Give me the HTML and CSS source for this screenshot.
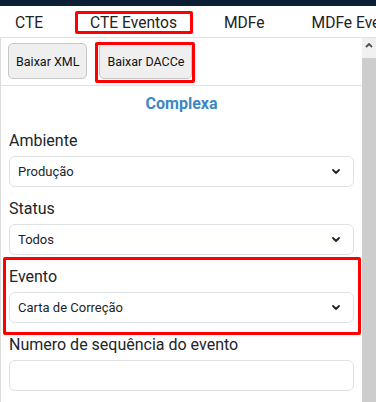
FILE: index.html
```html
<!DOCTYPE html>
<html lang="pt-BR">
<head>
    <meta charset="UTF-8">
    <meta name="viewport" content="width=device-width, initial-scale=1.0">
    <title>CTE Eventos</title>
    <link rel="stylesheet" href="styles.css">
</head>
<body>

<div class="topbar"></div>

<nav class="tabs">
    <span class="tab">CTE</span>
    <span class="tab">CTE Eventos</span>
    <span class="tab">MDFe</span>
    <span class="tab">MDFe Eventos</span>
</nav>

<div class="pane">
    <div class="main">
        <div class="toolbar">
            <button type="button" class="btn">Baixar XML</button>
            <button type="button" class="btn">Baixar DACCe</button>
        </div>

        <form class="form">
            <h3 class="title">Complexa</h3>

            <div class="group">
                <label>Ambiente</label>
                <div class="select-wrap">
                    <select class="control">
                        <option>Produção</option>
                        <option>Homologação</option>
                    </select>
                    <svg class="chevron" width="8" height="5" viewBox="0 0 8 5"><path d="M1 1 L4 4 L7 1" fill="none" stroke="#222" stroke-width="1.8" stroke-linecap="round" stroke-linejoin="round"/></svg>
                </div>
            </div>

            <div class="group">
                <label>Status</label>
                <div class="select-wrap">
                    <select class="control">
                        <option>Todos</option>
                    </select>
                    <svg class="chevron" width="8" height="5" viewBox="0 0 8 5"><path d="M1 1 L4 4 L7 1" fill="none" stroke="#222" stroke-width="1.8" stroke-linecap="round" stroke-linejoin="round"/></svg>
                </div>
            </div>

            <div class="group">
                <label>Evento</label>
                <div class="select-wrap">
                    <select class="control">
                        <option>Carta de Correção</option>
                    </select>
                    <svg class="chevron" width="8" height="5" viewBox="0 0 8 5"><path d="M1 1 L4 4 L7 1" fill="none" stroke="#222" stroke-width="1.8" stroke-linecap="round" stroke-linejoin="round"/></svg>
                </div>
            </div>

            <div class="group">
                <label>Numero de sequência do evento</label>
                <input type="text" class="control">
            </div>
        </form>
    </div>

    <div class="scrollbar">
        <div class="scroll-up">
            <svg width="8" height="5" viewBox="0 0 8 5"><path d="M1 4 L4 1 L7 4" fill="none" stroke="#505050" stroke-width="1.8"/></svg>
        </div>
        <div class="scroll-thumb"></div>
    </div>
</div>

<!-- destaques em vermelho -->
<div class="mark mark-tab"></div>
<div class="mark mark-btn"></div>
<div class="mark mark-evento"></div>

</body>
</html>
```

FILE: styles.css
```css
* {
    box-sizing: border-box;
}
body {
    margin: 0;
    font-family: Roboto, "Liberation Sans", sans-serif;
    color: #212529;
    background: #fff;
    height: 402px;
    overflow: hidden;
    position: relative;
}
.topbar {
    height: 6px;
    background-color: #0b1e33;
}
.tabs {
    display: flex;
    gap: 47px;
    height: 32px;
    padding: 5px 0 0 15px;
    border-bottom: 1px solid #dee2e6;
    white-space: nowrap;
    overflow: hidden;
    font-size: 15.6px;
    line-height: 24px;
    color: #222;
}
.pane {
    display: flex;
    height: 364px;
    border-left: 1px solid #dcdcdc;
}
.main {
    flex: 1;
}
.toolbar {
    display: flex;
    gap: 12px;
    height: 48px;
    padding: 5px 7px;
    border-bottom: 1px solid #dee2e6;
}
.btn {
    height: 36px;
    padding: 0 7px;
    font-family: Roboto, "Liberation Sans", sans-serif;
    font-size: 12.5px;
    color: #111;
    background-color: #efefef;
    border: 1px solid #c6c6c6;
    border-radius: 5px;
}
.form {
    padding: 6px 8px 0 8px;
}
.title {
    margin: 0 0 13px;
    text-align: center;
    font-size: 16px;
    line-height: 24px;
    font-weight: bold;
    color: #3a87c9;
}
.group {
    margin-bottom: 10px;
}
.group label {
    display: block;
    font-size: 16px;
    line-height: 24px;
    margin-bottom: 3px;
}
.select-wrap {
    position: relative;
}
.control {
    display: block;
    width: 100%;
    height: 31px;
    padding: 0 8px;
    font-family: Roboto, "Liberation Sans", sans-serif;
    font-size: 13px;
    color: #212529;
    background: #fff;
    border: 1px solid #dee2e6;
    border-radius: 6px;
    appearance: none;
    -webkit-appearance: none;
    outline: none;
}
.chevron {
    position: absolute;
    right: 14px;
    top: 13px;
}
.scrollbar {
    width: 14px;
    display: flex;
    flex-direction: column;
    background-color: #f1f1f1;
}
.scroll-up {
    height: 20px;
    display: flex;
    justify-content: center;
    padding-top: 5px;
}
.scroll-thumb {
    flex: 1;
    background-color: #cdcdcd;
}
.mark {
    position: absolute;
    border: 3px solid #ff0000;
    border-radius: 2px;
}
.mark-tab {
    left: 75px;
    top: 11px;
    width: 118px;
    height: 23px;
}
.mark-btn {
    left: 95px;
    top: 42px;
    width: 100px;
    height: 41px;
}
.mark-evento {
    left: 3px;
    top: 257px;
    width: 358px;
    height: 78px;
}
```
